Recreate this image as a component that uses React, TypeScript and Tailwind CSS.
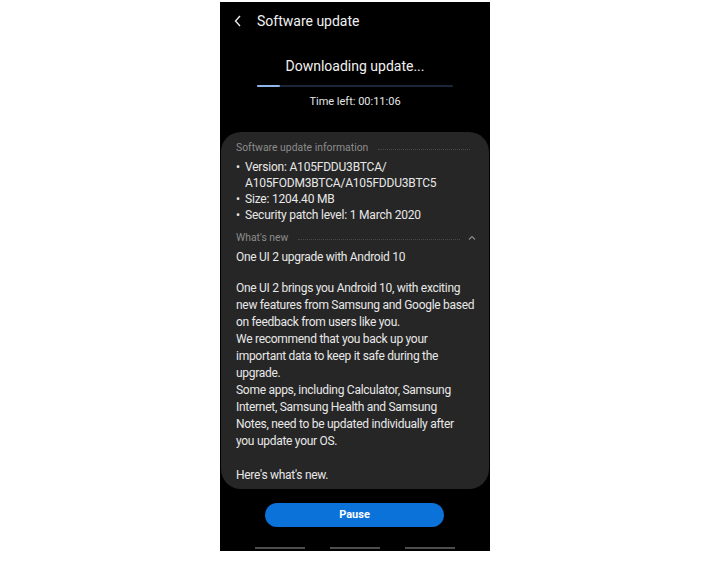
import React from 'react';

const bullets = [
  ['Version: A105FDDU3BTCA/', 'A105FODM3BTCA/A105FDDU3BTC5'],
  ['Size: 1204.40 MB'],
  ['Security patch level: 1 March 2020'],
];

const paragraphs = [
  'One UI 2 brings you Android 10, with exciting',
  'new features from Samsung and Google based',
  'on feedback from users like you.',
  'We recommend that you back up your',
  'important data to keep it safe during the',
  'upgrade.',
  'Some apps, including Calculator, Samsung',
  'Internet, Samsung Health and Samsung',
  'Notes, need to be updated individually after',
  'you update your OS.',
];

function SectionHeader({ label, chevron }: { label: string; chevron?: boolean }) {
  return (
    <div className="flex items-center h-[16px] text-[10.4px] text-[#8c8c8c]">
      <span className="whitespace-nowrap">{label}</span>
      <div className="flex-1 ml-[10px] mr-[4px] border-b border-dotted border-[#4a4a4a] h-0 mt-[2px]" />
      {chevron && (
        <svg width="12" height="12" viewBox="0 0 12 12" className="ml-[2px] mr-[-4px]">
          <path d="M3 7.5 L6 4.5 L9 7.5" fill="none" stroke="#8c8c8c" strokeWidth="1.1" />
        </svg>
      )}
    </div>
  );
}

export default function App() {
  return (
    <div className="w-[722px] h-[562px] bg-white pl-[220px] pt-[2px]" style={{ fontFamily: 'Roboto, "Noto Sans", sans-serif' }}>
      <div className="w-[270px] h-[549px] bg-black flex flex-col text-white">
        {/* header */}
        <div className="flex items-center h-[20px] mt-[9px]">
          <svg width="10" height="14" viewBox="0 0 10 14" className="ml-[13px]">
            <path d="M7 2 L2.5 7 L7 12" fill="none" stroke="#e8e8e8" strokeWidth="1.4" />
          </svg>
          <span className="ml-[14px] text-[14px] text-[#f0f0f0]">Software update</span>
        </div>

        {/* progress */}
        <div className="mt-[25px] text-center text-[14px] leading-[20px] text-[#f0f0f0]">Downloading update...</div>
        <div className="mx-[37px] mt-[9px] h-[2px] bg-[#1c2638] rounded-full">
          <div className="w-[23px] h-[2px] bg-[#8fb5e6] rounded-full" />
        </div>
        <div className="mt-[8px] text-center text-[11px] leading-[14px] text-[#e6e6e6]">Time left: 00:11:06</div>

        {/* info card */}
        <div className="mt-[23px] mx-[1px] h-[357px] bg-[#262626] rounded-[20px] pt-[8px] px-[15px]">
          <SectionHeader label="Software update information" />
          <div className="mt-[3px] text-[12px] leading-[16px] tracking-[-0.2px] text-[#e8e8e8]">
            {bullets.map((b, i) => (
              <div key={i} className="flex">
                <span className="w-[9px] shrink-0">•</span>
                <div>
                  {b.map((line) => (
                    <div key={line}>{line}</div>
                  ))}
                </div>
              </div>
            ))}
          </div>
          <div className="mt-[7px]">
            <SectionHeader label="What's new" chevron />
          </div>
          <div className="mt-[3px] text-[12px] leading-[17px] tracking-[-0.28px] text-[#e8e8e8]">
            <div>One UI 2 upgrade with Android 10</div>
            <div className="h-[14px]" />
            {paragraphs.map((p) => (
              <div key={p} className="whitespace-nowrap">{p}</div>
            ))}
            <div className="h-[17px]" />
            <div>Here's what's new.</div>
          </div>
        </div>

        {/* pause button */}
        <div className="mt-[14px] flex justify-center">
          <button className="w-[179px] h-[24px] rounded-full bg-[#0b72d9] text-white text-[11px] font-bold ml-[-1px]">Pause</button>
        </div>

        {/* nav bar */}
        <div className="mt-[20px] flex justify-center gap-[25px]">
          <div className="w-[50px] h-[2px] bg-[#4d4d4d]" />
          <div className="w-[50px] h-[2px] bg-[#4d4d4d]" />
          <div className="w-[50px] h-[2px] bg-[#4d4d4d]" />
        </div>
      </div>
    </div>
  );
}
